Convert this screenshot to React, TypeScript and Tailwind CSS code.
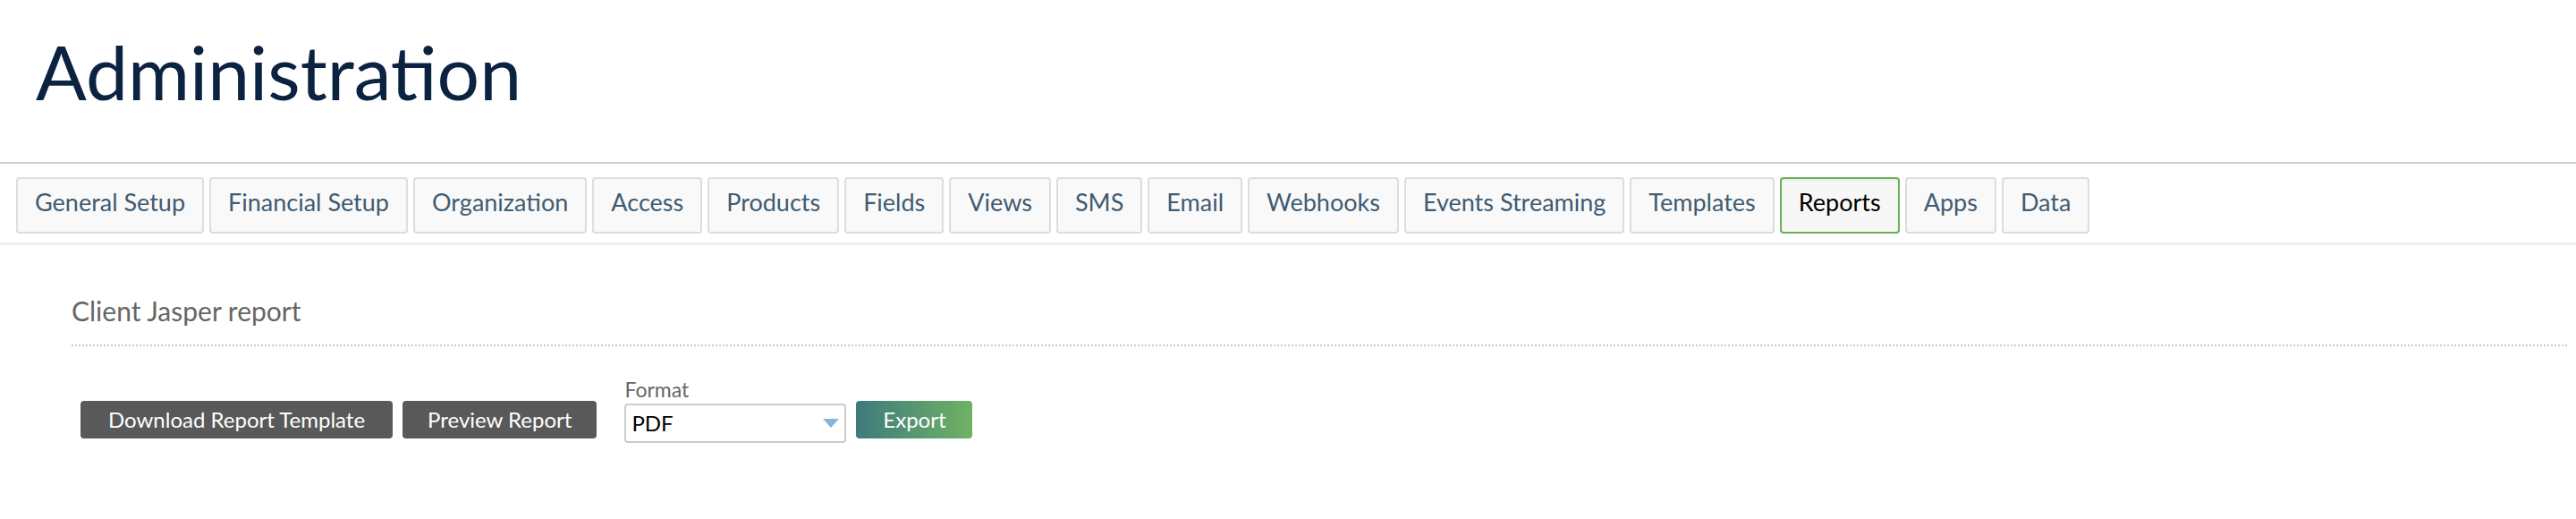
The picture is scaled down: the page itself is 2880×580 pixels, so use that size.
const tabs = [
  "General Setup",
  "Financial Setup",
  "Organization",
  "Access",
  "Products",
  "Fields",
  "Views",
  "SMS",
  "Email",
  "Webhooks",
  "Events Streaming",
  "Templates",
  "Reports",
  "Apps",
  "Data",
];

export default function App() {
  const active = "Reports";

  return (
    <div className="min-h-[580px] bg-white font-['Lato',sans-serif]">
      {/* page title */}
      <div className="h-[181px] px-[40px] pt-[38px]">
        <h1 className="text-[84px] leading-[84px] text-[#0b2340]">Administration</h1>
      </div>

      {/* admin tabs */}
      <div className="border-t-2 border-[#cfcfcf] px-[18px] pt-[15px] pb-[10px] border-b-[3px] border-b-[#efefe7]">
        <div className="flex gap-[6px]">
          {tabs.map((tab) => (
            <div
              key={tab}
              className={
                tab === active
                  ? "flex h-[63px] items-center rounded-[4px] border-2 border-[#6cb153] bg-[#f7f7f7] px-[19px] pb-[7px] text-[27px] text-black shadow-[inset_0_2px_3px_rgba(0,0,0,0.06)]"
                  : "flex h-[63px] items-center rounded-[4px] border-2 border-[#dddddd] bg-[#f9f9f9] px-[19px] pb-[7px] text-[27px] text-[#3f5b71]"
              }
            >
              {tab}
            </div>
          ))}
        </div>
      </div>

      {/* report section */}
      <div className="pl-[80px] pr-[10px] pt-[52px]">
        <h2 className="text-[30px] leading-[42px] text-[#666666]">Client Jasper report</h2>
        <div className="mt-[17px] border-t-2 border-dotted border-[#c8c8c8]" />

        <div className="mt-[34px] flex items-start pl-[10px]">
          <button className="mt-[27px] h-[42px] rounded-[4px] bg-[#595959] px-[31px] text-[24px] text-white">
            Download Report Template
          </button>
          <button className="ml-[11px] mt-[27px] h-[42px] rounded-[4px] bg-[#595959] px-[28px] text-[24px] text-white">
            Preview Report
          </button>

          <div className="ml-[31px] flex flex-col">
            <label className="text-[23px] leading-[28px] text-[#666666]">Format</label>
            <div className="mt-[2px] flex h-[44px] w-[248px] items-center justify-between rounded-[4px] border-2 border-[#cccccc] bg-white pl-[6px] pr-[6px]">
              <span className="text-[24px] text-black">PDF</span>
              <svg width="18" height="10" viewBox="0 0 18 10">
                <polygon points="0,0 18,0 9,10" fill="#84b6dc" />
              </svg>
            </div>
          </div>

          <button className="ml-[11px] mt-[27px] h-[42px] w-[130px] rounded-[4px] bg-gradient-to-r from-[#3f7a7a] to-[#70b262] text-[24px] text-white">
            Export
          </button>
        </div>
      </div>
    </div>
  );
}
